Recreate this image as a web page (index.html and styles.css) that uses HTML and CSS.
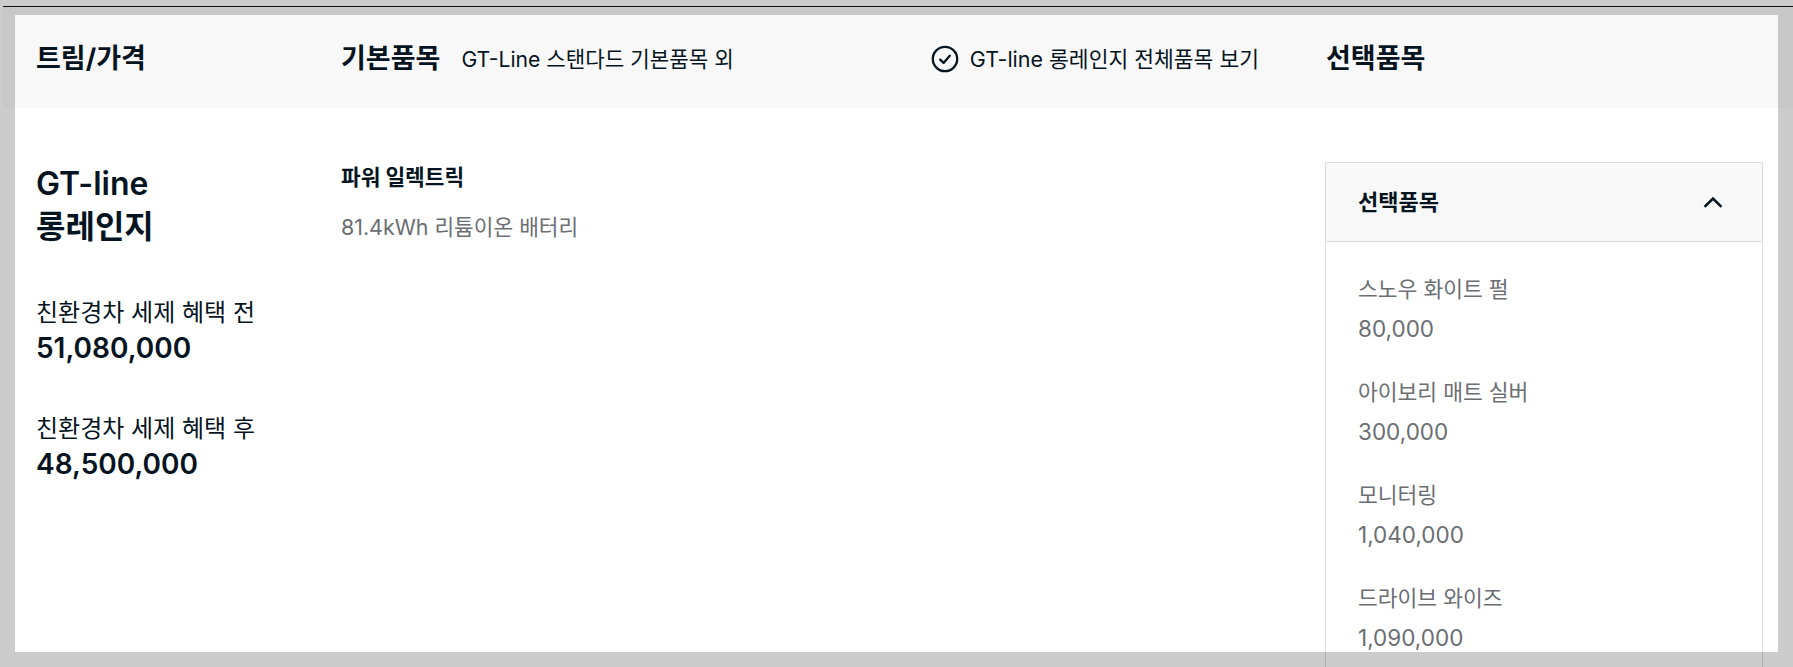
FILE: index.html
```html
<!DOCTYPE html>
<html lang="ko">
<head>
<meta charset="utf-8">
<title>트림/가격</title>
<link rel="stylesheet" href="styles.css">
</head>
<body>
<div class="topbar">
  <div class="head">
    <div class="head-title">트림/가격</div>
    <div class="head-basic">
      <span class="head-title">기본품목</span>
      <span class="head-sub">GT-Line 스탠다드 기본품목 외</span>
      <a class="head-link" href="#">
        <svg class="check" width="28" height="28" viewBox="0 0 28 28" aria-hidden="true">
          <circle cx="14" cy="14" r="12.2" fill="none" stroke="#05141f" stroke-width="2.3"/>
          <path d="M9.2 14.6 L12.6 17.9 L18.9 10.6" fill="none" stroke="#05141f" stroke-width="2.3" stroke-linecap="round" stroke-linejoin="round"/>
        </svg>
        <span>GT-line 롱레인지 전체품목 보기</span>
      </a>
    </div>
    <div class="head-title head-option">선택품목</div>
  </div>
</div>
<main class="main">
  <section class="trim">
    <h2 class="trim-name">GT-line<br>롱레인지</h2>
    <div class="price-group">
      <div class="price-label">친환경차 세제 혜택 전</div>
      <div class="price-value">51,080,000</div>
    </div>
    <div class="price-group">
      <div class="price-label">친환경차 세제 혜택 후</div>
      <div class="price-value">48,500,000</div>
    </div>
  </section>
  <section class="basic">
    <div class="basic-title">파워 일렉트릭</div>
    <div class="basic-desc">81.4kWh 리튬이온 배터리</div>
  </section>
  <section class="panel">
    <div class="panel-head">
      <span class="panel-title">선택품목</span>
      <svg class="chevron" width="20" height="12" viewBox="0 0 20 12" aria-hidden="true">
        <polyline points="2.5,10 10,2.6 17.5,10" fill="none" stroke="#05141f" stroke-width="2.6" stroke-linecap="square"/>
      </svg>
    </div>
    <ul class="panel-list">
      <li class="opt"><div class="opt-name">스노우 화이트 펄</div><div class="opt-price">80,000</div></li>
      <li class="opt"><div class="opt-name">아이보리 매트 실버</div><div class="opt-price">300,000</div></li>
      <li class="opt"><div class="opt-name">모니터링</div><div class="opt-price">1,040,000</div></li>
      <li class="opt"><div class="opt-name">드라이브 와이즈</div><div class="opt-price">1,090,000</div></li>
    </ul>
  </section>
</main>
</body>
</html>
```

FILE: styles.css
```css
html, body {
  margin: 0;
  padding: 0;
  height: 667px;
  overflow: hidden;
}
body {
  background: #cccccc;
  font-family: Inter, "Noto Sans CJK KR", sans-serif;
  color: #05141f;
}
.topbar {
  margin: 6px 0 0 3px;
  border-top: 1px solid #111;
  background: #c8c8c8;
  padding: 8px 15px 0 12px;
}
.head {
  width: 1763px;
  height: 93px;
  box-sizing: border-box;
  background: #f8f8f8;
  display: grid;
  grid-template-columns: 305px 984px 438px;
  padding: 28px 0 0 21px;
  align-items: start;
}
.head-title {
  font-size: 27px;
  font-weight: 700;
  line-height: 32px;
  white-space: nowrap;
}
.head-basic {
  display: flex;
  align-items: center;
  height: 32px;
  padding-right: 66px;
}
.head-sub {
  font-size: 21.2px;
  line-height: 32px;
  margin-left: 21px;
}
.head-link {
  margin-left: auto;
  display: flex;
  align-items: center;
  gap: 11px;
  color: #05141f;
  text-decoration: none;
  font-size: 21.5px;
  line-height: 32px;
}
.check { display: block; }
.head-option { padding-left: 1px; }

.main {
  margin-left: 15px;
  width: 1763px;
  height: 544px;
  box-sizing: border-box;
  background: #fff;
  display: grid;
  grid-template-columns: 305px 984px 438px;
  align-items: start;
  padding: 54px 0 0 21px;
}
.trim-name {
  margin: 0;
  font-size: 32px;
  font-weight: 600;
  line-height: 43px;
}
.price-group { margin-top: 50px; }
.price-group + .price-group { margin-top: 46px; }
.price-label {
  font-size: 24px;
  line-height: 30px;
}
.price-value {
  font-size: 28px;
  font-weight: 600;
  line-height: 40px;
}
.basic-title {
  font-size: 21.4px;
  font-weight: 700;
  line-height: 30px;
}
.basic-desc {
  margin-top: 20px;
  font-size: 21.4px;
  line-height: 30px;
  color: #6b6e72;
}
.panel {
  border: 1px solid rgba(0, 0, 0, 0.13);
  height: 560px;
  box-sizing: border-box;
}
.panel-head {
  height: 79px;
  box-sizing: border-box;
  background: #f8f8f8;
  border-bottom: 1px solid rgba(0, 0, 0, 0.13);
  display: flex;
  align-items: center;
  justify-content: space-between;
  padding: 0 39px 0 32px;
}
.panel-title {
  font-size: 22px;
  font-weight: 700;
  line-height: 30px;
}
.chevron { display: block; }
.panel-list {
  list-style: none;
  margin: 0;
  padding: 32px 0 0 32px;
  display: flex;
  flex-direction: column;
  gap: 33px;
}
.opt-name {
  font-size: 21.5px;
  line-height: 30px;
  color: #6b6e72;
}
.opt-price {
  margin-top: 10px;
  font-size: 22.5px;
  line-height: 30px;
  color: #6b6e72;
}
```
